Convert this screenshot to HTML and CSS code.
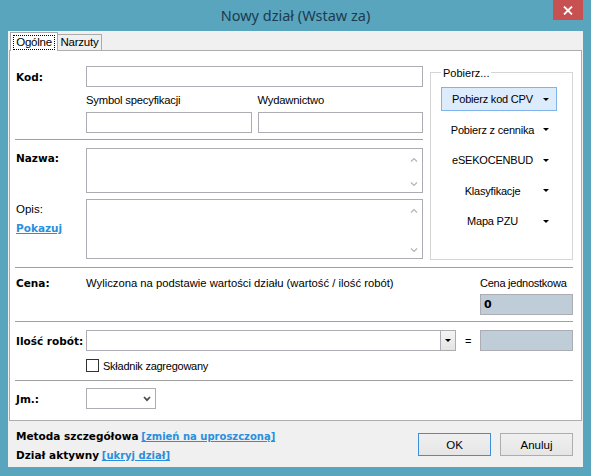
FILE: index.html
```html
<!DOCTYPE html>
<html lang="pl">
<head>
<meta charset="utf-8">
<title>Nowy dział (Wstaw za)</title>
<link rel="stylesheet" href="styles.css">
</head>
<body>
<div class="window">
  <div class="titlebar">
    <span></span>
    <span class="title">Nowy dział (Wstaw za)</span>
    <span class="close"><svg width="10" height="9" viewBox="0 0 10 9"><path d="M1 0.5 L9 8.5 M9 0.5 L1 8.5" stroke="#fff" stroke-width="1.8" fill="none"/></svg></span>
  </div>
  <div class="client">
    <div class="tabs">
      <div class="tab active"><span class="focus">Ogólne</span></div>
      <div class="tab">Narzuty</div>
    </div>
    <div class="panel">
      <div class="top">
        <div class="leftcol">
          <div class="row r-kod">
            <span class="lbl b">Kod:</span>
            <span class="box grow"></span>
          </div>
          <div class="subrow sublabels">
            <span class="sub">Symbol specyfikacji</span>
            <span class="sub">Wydawnictwo</span>
          </div>
          <div class="subrow subinputs">
            <span class="box sub"></span>
            <span class="box sub"></span>
          </div>
          <div class="sep s-kod"></div>
          <div class="row r-nazwa">
            <span class="lbl b lbl-top">Nazwa:</span>
            <span class="box grow area h-nazwa">
              <span class="scroll">
                <svg width="8" height="5" viewBox="0 0 8 5"><path d="M1 4.5 L4 1.5 L7 4.5" stroke="#b4b4b4" stroke-width="1.2" fill="none"/></svg>
                <svg width="8" height="5" viewBox="0 0 8 5"><path d="M1 0.5 L4 3.5 L7 0.5" stroke="#b4b4b4" stroke-width="1.2" fill="none"/></svg>
              </span>
            </span>
          </div>
          <div class="row r-opis">
            <span class="lbl lbl-top">
              <span class="opis">Opis:</span>
              <a class="link pokaz">Pokazuj</a>
            </span>
            <span class="box grow area h-opis">
              <span class="scroll">
                <svg width="8" height="5" viewBox="0 0 8 5"><path d="M1 4.5 L4 1.5 L7 4.5" stroke="#b4b4b4" stroke-width="1.2" fill="none"/></svg>
                <svg width="8" height="5" viewBox="0 0 8 5"><path d="M1 0.5 L4 3.5 L7 0.5" stroke="#b4b4b4" stroke-width="1.2" fill="none"/></svg>
              </span>
            </span>
          </div>
        </div>
        <div class="group">
          <span class="legend">Pobierz...</span>
          <div class="btns">
            <div class="dbtn hot"><span class="t">Pobierz kod CPV</span><span class="arr"></span></div>
            <div class="dbtn"><span class="t">Pobierz z cennika</span><span class="arr"></span></div>
            <div class="dbtn"><span class="t">eSEKOCENBUD</span><span class="arr"></span></div>
            <div class="dbtn"><span class="t">Klasyfikacje</span><span class="arr"></span></div>
            <div class="dbtn"><span class="t">Mapa PZU</span><span class="arr"></span></div>
          </div>
        </div>
      </div>
      <div class="sep s-top"></div>
      <div class="cena">
        <span class="lbl b">Cena:</span>
        <span class="desc">Wyliczona na podstawie wartości działu (wartość / ilość robót)</span>
        <div class="cj">
          <span class="cj-lbl">Cena jednostkowa</span>
          <span class="box ro"><b>0</b></span>
        </div>
      </div>
      <div class="sep s-cena"></div>
      <div class="row r-ilosc">
        <span class="lbl b">Ilość robót:</span>
        <span class="box w-ilosc"></span>
        <span class="ddbtn"><span class="arr"></span></span>
        <span class="eq">=</span>
        <span class="box ro w-res"></span>
      </div>
      <div class="chkrow"><span class="chk"></span><span>Składnik zagregowany</span></div>
      <div class="sep s-chk"></div>
      <div class="row r-jm">
        <span class="lbl b">Jm.:</span>
        <span class="box w-jm"><svg width="8" height="6" viewBox="0 0 8 6"><path d="M1 1 L4 4.2 L7 1" stroke="#4a4a4a" stroke-width="1.7" fill="none"/></svg></span>
      </div>
    </div>
    <div class="footer">
      <div class="info">
        <div><b class="fb">Metoda szczegółowa</b> <a class="link fl">[zmień na uproszczoną]</a></div>
        <div><b class="fb">Dział aktywny</b> <a class="link fl">[ukryj dział]</a></div>
      </div>
      <div class="actions">
        <span class="btn default">OK</span>
        <span class="btn">Anuluj</span>
      </div>
    </div>
  </div>
</div>
</body>
</html>
```
FILE: styles.css
```css
html, body {
  margin: 0;
  padding: 0;
}
body {
  width: 591px;
  height: 476px;
  overflow: hidden;
  font-family: "Liberation Sans", Arial, sans-serif;
  font-size: 11px;
  letter-spacing: -0.25px;
  color: #000;
}
.window {
  width: 591px;
  height: 476px;
  background: #58a5bd;
  display: flex;
  flex-direction: column;
}
.titlebar {
  height: 31px;
  display: grid;
  grid-template-columns: 1fr auto 1fr;
  align-items: start;
}
.title {
  font-family: "Noto Sans", "Open Sans", sans-serif;
  font-size: 14.5px;
  letter-spacing: 0;
  line-height: 30px;
  color: #1d3b4f;
}
.close {
  justify-self: end;
  margin-right: 8px;
  width: 30px;
  height: 20px;
  background: #c75050;
  display: flex;
  align-items: center;
  justify-content: center;
}
.client {
  margin: 0 8px;
  height: 436px;
  background: #f0f0f0;
  display: flex;
  flex-direction: column;
}
.tabs {
  margin-top: 1px;
  margin-bottom: -1px;
  height: 19px;
  padding-left: 2px;
  display: flex;
  align-items: flex-start;
}
.tab {
  box-sizing: border-box;
  border: 1px solid #acacac;
  border-bottom: none;
  background: #f0f0f0;
  height: 16px;
  margin-top: 2px;
  width: 45px;
  margin-left: -1px;
  line-height: 15px;
  text-align: center;
  font-size: 11.5px;
}
.tab.active {
  position: relative;
  z-index: 1;
  background: #fff;
  height: 19px;
  margin-top: 0;
  width: 48px;
  margin-left: 0;
  padding-top: 2px;
}
.focus {
  display: inline-block;
  outline: 1px dotted #000;
  outline-offset: 0;
  padding: 0 2px;
  line-height: 13px;
}
.panel {
  box-sizing: border-box;
  margin: 0 1px;
  height: 371px;
  border: 1px solid #adadad;
  background: #fff;
  padding: 0 8px 0 5px;
}
.top {
  display: flex;
  align-items: flex-start;
}
.leftcol {
  width: 408px;
  margin-top: 15px;
}
.row {
  display: flex;
  align-items: center;
}
.lbl {
  width: 70px;
  padding-left: 1px;
  flex: none;
}
.b {
  font-family: "DejaVu Sans", sans-serif;
  font-weight: bold;
  font-size: 10.5px;
  letter-spacing: 0;
}
.lbl-top {
  align-self: flex-start;
  padding-top: 3px;
  line-height: 14px;
}
.box {
  box-sizing: border-box;
  display: flex;
  border: 1px solid #abadb3;
  background: #fff;
  height: 21px;
}
.grow {
  flex: 1;
}
.r-kod {
  height: 21px;
}
.subrow {
  display: flex;
  gap: 6px;
  padding-left: 71px;
}
.sublabels {
  height: 25px;
  align-items: center;
  font-size: 11.25px;
  letter-spacing: -0.2px;
}
.sub {
  flex: 1;
}
.sep {
  height: 0;
  border-top: 1px solid #a0a0a0;
}
.s-kod {
  margin-top: 6px;
}
.r-nazwa {
  margin-top: 8px;
}
.h-nazwa {
  height: 45px;
}
.r-opis {
  margin-top: 6px;
}
.h-opis {
  height: 60px;
}
.area {
  justify-content: flex-end;
}
.scroll {
  width: 16px;
  display: flex;
  flex-direction: column;
  justify-content: space-between;
  align-items: center;
  padding: 8px 0 5px;
}
.opis {
  display: block;
  font-size: 11.5px;
  letter-spacing: 0;
}
.link {
  color: #2a8fdc;
  text-decoration: underline;
  cursor: pointer;
}
.pokaz {
  display: block;
  margin-top: 5px;
  font-family: "DejaVu Sans", sans-serif;
  font-weight: bold;
  font-size: 10.5px;
  letter-spacing: 0;
}
.group {
  box-sizing: border-box;
  margin-top: 21px;
  margin-left: 7px;
  width: 143px;
  height: 188px;
  border: 1px solid #d5d5d5;
}
.legend {
  display: block;
  width: fit-content;
  margin: -7px 0 0 10px;
  padding: 0 2px;
  background: #fff;
  line-height: 14px;
  font-size: 11px;
  letter-spacing: 0;
}
.btns {
  margin-top: 7px;
  padding-left: 10px;
  display: flex;
  flex-direction: column;
  gap: 6.5px;
}
.dbtn {
  box-sizing: border-box;
  width: 116px;
  height: 24px;
  border: 1px solid transparent;
  display: flex;
  align-items: center;
}
.dbtn.hot {
  background: #dcecfc;
  border-color: #7eb4ea;
}
.dbtn .t {
  width: 101px;
  text-align: center;
  font-size: 11px;
  letter-spacing: -0.2px;
}
.arr {
  width: 0;
  height: 0;
  border-left: 3px solid transparent;
  border-right: 3px solid transparent;
  border-top: 3px solid #000;
}
.s-top {
  margin-top: 7px;
}
.cena {
  display: flex;
  align-items: flex-start;
  padding-top: 8px;
  line-height: 14px;
}
.desc {
  flex: 1;
  font-size: 11.25px;
  letter-spacing: 0;
}
.cj {
  width: 93px;
  display: flex;
  flex-direction: column;
}
.cj .ro {
  margin-top: 4px;
  align-items: center;
  padding-left: 3px;
}
.ro {
  background: #bfcdd9;
}
.ro b {
  font-family: "DejaVu Sans", sans-serif;
  font-size: 11px;
}
.s-cena {
  margin-top: 6px;
}
.r-ilosc {
  margin-top: 8px;
  height: 21px;
}
.w-ilosc {
  width: 355px;
}
.ddbtn {
  box-sizing: border-box;
  width: 15px;
  height: 21px;
  border: 1px solid #acacac;
  border-left: none;
  background: linear-gradient(#f4f4f4, #e4e4e4);
  display: flex;
  align-items: center;
  justify-content: center;
}
.eq {
  width: 24px;
  text-align: center;
}
.w-res {
  width: 93px;
}
.chkrow {
  margin-top: 8px;
  padding-left: 71px;
  display: flex;
  align-items: center;
  height: 13px;
}
.chk {
  box-sizing: border-box;
  width: 13px;
  height: 13px;
  border: 1px solid #333;
  background: #fff;
  margin-right: 4px;
}
.s-chk {
  margin-top: 8px;
}
.r-jm {
  margin-top: 7px;
}
.w-jm {
  width: 70px;
  justify-content: flex-end;
  align-items: center;
  padding-right: 4px;
}
.footer {
  flex: 1;
  display: flex;
  align-items: flex-start;
  padding-left: 8px;
}
.info {
  padding-top: 6px;
  line-height: 19px;
}
.fb {
  font-family: "DejaVu Sans", sans-serif;
  font-weight: bold;
  font-size: 10.5px;
  letter-spacing: 0;
}
.fl {
  font-family: "DejaVu Sans", sans-serif;
  font-weight: bold;
  font-size: 10px;
  letter-spacing: 0;
}
.actions {
  margin-left: auto;
  margin-top: 12px;
  margin-right: 10px;
  display: flex;
  gap: 9px;
}
.btn {
  box-sizing: border-box;
  width: 73px;
  height: 23px;
  border: 1px solid #adadad;
  background: linear-gradient(#f0f0f0, #e5e5e5);
  display: flex;
  align-items: center;
  justify-content: center;
  font-size: 11.5px;
  letter-spacing: 0;
}
.btn.default {
  border-color: #3c8fd8;
}
```
